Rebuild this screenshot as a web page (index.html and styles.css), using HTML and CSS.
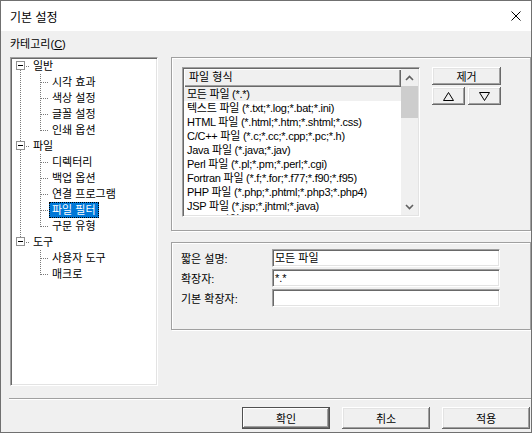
FILE: index.html
```html
<!DOCTYPE html>
<html lang="ko">
<head>
<meta charset="utf-8">
<title>기본 설정</title>
<link rel="stylesheet" href="styles.css">
</head>
<body>
<div class="window">
  <div class="titlebar">
    <span class="title">기본 설정</span>
    <svg class="close" width="10" height="10" viewBox="0 0 10 10"><path d="M0.5 0.5L9.5 9.5M9.5 0.5L0.5 9.5" stroke="#000" stroke-width="1" fill="none"/></svg>
  </div>
  <div class="client">
    <div class="cat-label">카테고리(<u>C</u>)</div>
    <div class="main">
      <div class="tree">
        <div class="row"><span class="c0 root-first"><svg class="expander" width="9" height="9" viewBox="0 0 9 9"><rect x="0.5" y="0.5" width="8" height="8" fill="#fff" stroke="#919191"/><path d="M2 4.5H7" stroke="#000"/></svg></span><span class="lbl">일반</span></div>
        <div class="row"><span class="c0 pipe"></span><span class="c1 branch"></span><span class="lbl">시각 효과</span></div>
        <div class="row"><span class="c0 pipe"></span><span class="c1 branch"></span><span class="lbl">색상 설정</span></div>
        <div class="row"><span class="c0 pipe"></span><span class="c1 branch"></span><span class="lbl">글꼴 설정</span></div>
        <div class="row"><span class="c0 pipe"></span><span class="c1 branch-last"></span><span class="lbl">인쇄 옵션</span></div>
        <div class="row"><span class="c0 root-mid"><svg class="expander" width="9" height="9" viewBox="0 0 9 9"><rect x="0.5" y="0.5" width="8" height="8" fill="#fff" stroke="#919191"/><path d="M2 4.5H7" stroke="#000"/></svg></span><span class="lbl">파일</span></div>
        <div class="row"><span class="c0 pipe"></span><span class="c1 branch"></span><span class="lbl">디렉터리</span></div>
        <div class="row"><span class="c0 pipe"></span><span class="c1 branch"></span><span class="lbl">백업 옵션</span></div>
        <div class="row"><span class="c0 pipe"></span><span class="c1 branch"></span><span class="lbl">연결 프로그램</span></div>
        <div class="row"><span class="c0 pipe"></span><span class="c1 branch"></span><span class="lbl selected">파일 필터</span></div>
        <div class="row"><span class="c0 pipe"></span><span class="c1 branch-last"></span><span class="lbl">구문 유형</span></div>
        <div class="row"><span class="c0 root-last"><svg class="expander" width="9" height="9" viewBox="0 0 9 9"><rect x="0.5" y="0.5" width="8" height="8" fill="#fff" stroke="#919191"/><path d="M2 4.5H7" stroke="#000"/></svg></span><span class="lbl">도구</span></div>
        <div class="row"><span class="c0"></span><span class="c1 branch"></span><span class="lbl">사용자 도구</span></div>
        <div class="row"><span class="c0"></span><span class="c1 branch-last"></span><span class="lbl">매크로</span></div>
      </div>
      <div class="right">
        <div class="group top-group">
          <div class="listbox">
            <div class="list-col">
              <div class="list-header">파일 형식</div>
              <div class="list-row current">모든 파일 (*.*)</div>
              <div class="list-row">텍스트 파일 (*.txt;*.log;*.bat;*.ini)</div>
              <div class="list-row">HTML 파일 (*.html;*.htm;*.shtml;*.css)</div>
              <div class="list-row">C/C++ 파일 (*.c;*.cc;*.cpp;*.pc;*.h)</div>
              <div class="list-row">Java 파일 (*.java;*.jav)</div>
              <div class="list-row">Perl 파일 (*.pl;*.pm;*.perl;*.cgi)</div>
              <div class="list-row">Fortran 파일 (*.f;*.for;*.f77;*.f90;*.f95)</div>
              <div class="list-row">PHP 파일 (*.php;*.phtml;*.php3;*.php4)</div>
              <div class="list-row">JSP 파일 (*.jsp;*.jhtml;*.java)</div>
              <div class="list-row">LaTeX 파일 (*.tex;*.ltx;*.sty)</div>
            </div>
            <div class="vscroll">
              <div class="arrow"><svg width="9" height="6" viewBox="0 0 9 6"><path d="M1 5L4.5 1.5L8 5" fill="none" stroke="#606060" stroke-width="1.6"/></svg></div>
              <div class="track"><div class="thumb"></div></div>
              <div class="arrow"><svg width="9" height="6" viewBox="0 0 9 6"><path d="M1 1L4.5 4.5L8 1" fill="none" stroke="#606060" stroke-width="1.6"/></svg></div>
            </div>
          </div>
          <div class="side-buttons">
            <button class="btn remove">제거</button>
            <div class="updown">
              <button class="btn small"><svg width="11" height="9" viewBox="0 0 11 9"><path d="M5.5 0.5L10.5 8.5H0.5Z" fill="none" stroke="#000"/></svg></button>
              <button class="btn small"><svg width="11" height="9" viewBox="0 0 11 9"><path d="M0.5 0.5H10.5L5.5 8.5Z" fill="none" stroke="#000"/></svg></button>
            </div>
          </div>
        </div>
        <div class="group bottom-group">
          <div class="field"><span class="flabel">짧은 설명:</span><div class="textbox">모든 파일</div></div>
          <div class="field"><span class="flabel">확장자:</span><div class="textbox">*.*</div></div>
          <div class="field"><span class="flabel">기본 확장자:</span><div class="textbox"></div></div>
        </div>
      </div>
    </div>
    <div class="separator"></div>
    <div class="buttons">
      <button class="btn dlg default">확인</button>
      <button class="btn dlg">취소</button>
      <button class="btn dlg">적용</button>
    </div>
  </div>
</div>
</body>
</html>
```

FILE: styles.css
```css
* { box-sizing: border-box; }
html, body { margin: 0; padding: 0; }
body {
  width: 532px;
  height: 433px;
  overflow: hidden;
  background: #f0f0f0;
  font-family: "Liberation Sans", "Noto Sans CJK KR", sans-serif;
  font-size: 11px;
  color: #000;
}
.window {
  width: 532px;
  height: 433px;
  border: 1px solid #707070;
  background: #f0f0f0;
  display: flex;
  flex-direction: column;
  overflow: hidden;
}
.titlebar {
  height: 30px;
  flex: none;
  background: #fff;
  display: flex;
  align-items: center;
  padding: 0 10px 0 9px;
}
.title { flex: 1; font-size: 12px; }
.close { display: block; }

.client {
  flex: 1;
  display: flex;
  flex-direction: column;
  padding: 6px 0 0 9px;
}
.cat-label {
  height: 14px;
  line-height: 14px;
  margin-bottom: 6px;
  white-space: nowrap;
}
.main {
  display: flex;
  height: 329px;
  flex: none;
}

/* sunken 3D border */
.tree, .listbox, .textbox {
  border: 1px solid;
  border-color: #a0a0a0 #fff #fff #a0a0a0;
  box-shadow: inset 1px 1px 0 #696969, inset -1px -1px 0 #e3e3e3;
  background: #fff;
}

.tree {
  width: 148px;
  height: 329px;
  flex: none;
  overflow: hidden;
}
.row {
  display: flex;
  height: 16px;
  align-items: stretch;
  white-space: nowrap;
}
.c0 { width: 19px; flex: none; background-repeat: no-repeat; }
.c1 { width: 19px; flex: none; background-repeat: no-repeat; }
.expander { display: block; margin: 3px 0 0 5px; }

.root-first {
  background-image:
    repeating-linear-gradient(to right, #7a7a7a 0 1px, transparent 1px 2px),
    repeating-linear-gradient(to bottom, #7a7a7a 0 1px, transparent 1px 2px);
  background-position: 15px 8px, 9px 8px;
  background-size: 4px 1px, 1px 8px;
}
.root-mid {
  background-image:
    repeating-linear-gradient(to right, #7a7a7a 0 1px, transparent 1px 2px),
    repeating-linear-gradient(to bottom, #7a7a7a 0 1px, transparent 1px 2px);
  background-position: 15px 8px, 9px 0;
  background-size: 4px 1px, 1px 16px;
}
.root-last {
  background-image:
    repeating-linear-gradient(to right, #7a7a7a 0 1px, transparent 1px 2px),
    repeating-linear-gradient(to bottom, #7a7a7a 0 1px, transparent 1px 2px);
  background-position: 15px 8px, 9px 0;
  background-size: 4px 1px, 1px 8px;
}
.pipe {
  background-image: repeating-linear-gradient(to bottom, #7a7a7a 0 1px, transparent 1px 2px);
  background-position: 9px 0;
  background-size: 1px 16px;
}
.branch {
  background-image:
    repeating-linear-gradient(to right, #7a7a7a 0 1px, transparent 1px 2px),
    repeating-linear-gradient(to bottom, #7a7a7a 0 1px, transparent 1px 2px);
  background-position: 11px 8px, 10px 0;
  background-size: 8px 1px, 1px 16px;
}
.branch-last {
  background-image:
    repeating-linear-gradient(to right, #7a7a7a 0 1px, transparent 1px 2px),
    repeating-linear-gradient(to bottom, #7a7a7a 0 1px, transparent 1px 2px);
  background-position: 11px 8px, 10px 0;
  background-size: 8px 1px, 1px 9px;
}
.lbl {
  border: 1px solid transparent;
  padding: 0 2px;
  line-height: 14px;
  height: 16px;
}
.lbl.selected {
  background: #0078d7;
  color: #fff;
  border: 1px dotted #000;
}

.right {
  flex: 1;
  margin-left: 13px;
  display: flex;
  flex-direction: column;
}
.group {
  border: 1px solid #a0a0a0;
  box-shadow: inset 1px 1px 0 #fff, 1px 1px 0 #fff;
}
.top-group {
  height: 174px;
  flex: none;
  display: flex;
  align-items: flex-start;
  padding: 9px 0 0 10px;
}
.listbox {
  width: 238px;
  height: 150px;
  flex: none;
  padding: 1px;
  display: flex;
}
.list-col {
  flex: 1;
  min-width: 0;
  overflow: hidden;
}
.list-header {
  height: 18px;
  line-height: 17px;
  padding-left: 5px;
  background: #f0f0f0;
  box-shadow: inset 1px 1px 0 #fff, inset -1px -1px 0 #696969, inset -2px -2px 0 #a0a0a0;
  white-space: nowrap;
}
.list-row {
  height: 14px;
  line-height: 14px;
  padding-left: 3px;
  white-space: nowrap;
  letter-spacing: -0.25px;
}
.list-row.current { background: #f0f0f0; }

.vscroll {
  width: 17px;
  flex: none;
  background: #f0f0f0;
  display: flex;
  flex-direction: column;
}
.arrow {
  height: 17px;
  flex: none;
  display: flex;
  align-items: center;
  justify-content: center;
}
.arrow svg { display: block; }
.track { flex: 1; }
.thumb { height: 32px; background: #cdcdcd; }

.side-buttons {
  margin-left: 12px;
  display: flex;
  flex-direction: column;
  gap: 2px;
}
.btn {
  font: inherit;
  color: #000;
  background: #f0f0f0;
  border: none;
  padding: 0;
  margin: 0;
  box-shadow: inset -1px -1px 0 #696969, inset 1px 1px 0 #fff, inset -2px -2px 0 #a0a0a0, inset 2px 2px 0 #e3e3e3;
  display: flex;
  align-items: center;
  justify-content: center;
}
.remove { width: 69px; height: 18px; }
.updown { display: flex; gap: 3px; }
.small { width: 33px; height: 18px; }
.small svg { display: block; }

.bottom-group {
  margin-top: 11px;
  height: 88px;
  flex: none;
  padding: 6px 0 0 9px;
  display: flex;
  flex-direction: column;
  gap: 2px;
}
.field {
  display: flex;
  align-items: center;
  height: 18px;
}
.flabel { width: 91px; flex: none; white-space: nowrap; }
.textbox {
  width: 228px;
  height: 18px;
  padding: 0 2px;
  line-height: 16px;
  white-space: nowrap;
}

.separator {
  margin-top: 12px;
  margin-left: -1px;
  width: calc(100% + 1px);
  height: 2px;
  border-top: 1px solid #a0a0a0;
  border-bottom: 1px solid #fff;
}
.buttons {
  margin-top: 7px;
  margin-right: 1px;
  display: flex;
  justify-content: flex-end;
  gap: 12px;
}
.dlg { width: 88px; height: 22px; }
.dlg.default {
  border: 1px solid #505050;
  box-shadow: inset -1px -1px 0 #696969, inset 1px 1px 0 #fff, inset -2px -2px 0 #a0a0a0;
}
```
